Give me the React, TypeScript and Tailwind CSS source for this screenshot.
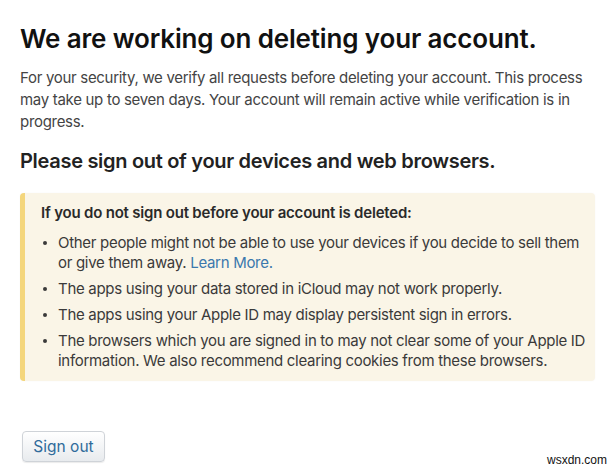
export default function App() {
  const items = [
    <>
      Other people might not be able to use your devices if you decide to sell them or give them away.{" "}
      <a href="#" className="text-[#3b78ad]">
        Learn More.
      </a>
    </>,
    <>The apps using your data stored in iCloud may not work properly.</>,
    <>The apps using your Apple ID may display persistent sign in errors.</>,
    <>
      The browsers which you are signed in to may not clear some of your Apple ID information. We also recommend
      clearing cookies from these browsers.
    </>,
  ];

  return (
    <div className="relative w-[612px] h-[474px] bg-white font-['Inter','Liberation_Sans',sans-serif] overflow-hidden">
      <div className="pl-5 pr-[22px] pt-[23px]">
        <h1 className="text-[26px] leading-[32px] font-semibold text-[#111] tracking-[-0.15px]">
          We are working on deleting your account.
        </h1>
        <p className="mt-[12px] text-[15px] leading-[22px] text-[#444] tracking-[-0.3px]">
          For your security, we verify all requests before deleting your account. This process may take up to seven
          days. Your account will remain active while verification is in progress.
        </p>
        <h2 className="mt-[15px] text-[20px] leading-[26px] font-semibold text-[#222] tracking-[-0.3px]">
          Please sign out of your devices and web browsers.
        </h2>
      </div>

      <div className="ml-[20px] mr-[17px] mt-[19px] rounded-[4px] border-l-[5px] border-[#f4d67c] bg-[#faf5e7] pl-[16px] pr-[8px] pt-[10px] pb-[10px] text-[#333] shadow-[0_0_2px_rgba(0,0,0,0.04)]">
        <p className="text-[15px] leading-[20px] font-semibold tracking-[-0.2px] text-[#2a2a2a]">
          If you do not sign out before your account is deleted:
        </p>
        <ul className="mt-[10px] flex flex-col gap-[6px]">
          {items.map((it, i) => (
            <li key={i} className="flex text-[15px] leading-[20px] tracking-[-0.3px] text-[#3a3a3a]">
              <span className="w-[17px] shrink-0 pt-[8px] pl-[2px]">
                <span className="block w-[4px] h-[4px] rounded-full bg-[#3a3a3a]" />
              </span>
              <span>{it}</span>
            </li>
          ))}
        </ul>
      </div>

      <div className="pl-[22px] mt-[50px]">
        <button className="h-[31px] w-[83px] rounded-[4px] border border-[#cfd3d8] bg-gradient-to-b from-[#ffffff] to-[#e8ebee] text-[15.5px] text-[#2f6b9b] shadow-[0_1px_1px_rgba(0,0,0,0.08)]">
          Sign out
        </button>
      </div>

      <div className="absolute right-[5px] bottom-[5px] text-[12px] text-[#111] font-['Liberation_Sans',sans-serif]">
        wsxdn.com
      </div>
    </div>
  );
}
